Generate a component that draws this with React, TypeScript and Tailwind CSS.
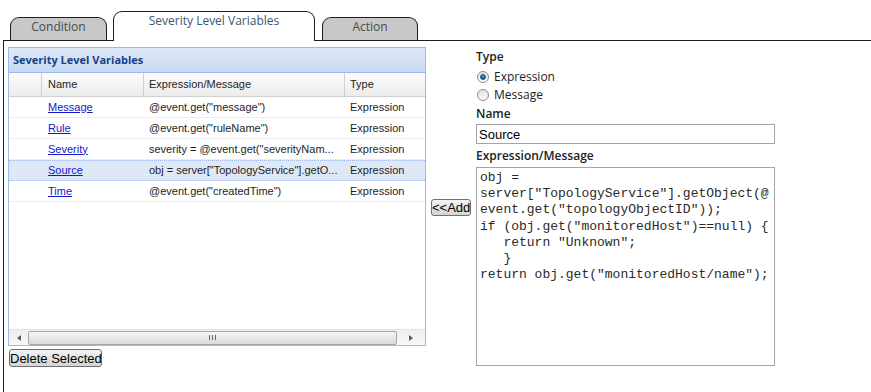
import { useState } from "react";

const rows = [
  { name: "Message", expr: '@event.get("message")', type: "Expression" },
  { name: "Rule", expr: '@event.get("ruleName")', type: "Expression" },
  { name: "Severity", expr: 'severity = @event.get("severityNam...', type: "Expression" },
  { name: "Source", expr: 'obj = server["TopologyService"].getO...', type: "Expression" },
  { name: "Time", expr: '@event.get("createdTime")', type: "Expression" },
];

const code = [
  "obj =",
  'server["TopologyService"].getObject(@',
  'event.get("topologyObjectID"));',
  'if (obj.get("monitoredHost")==null) {',
  '   return "Unknown";',
  "   }",
  'return obj.get("monitoredHost/name");',
].join("\n");

function Radio({ checked }: { checked: boolean }) {
  return (
    <span className="w-[12px] h-[12px] rounded-full border border-[#8e8f8f] bg-gradient-to-b from-[#e2e2e2] to-[#fbfbfb] flex items-center justify-center shrink-0">
      {checked && <span className="w-[6px] h-[6px] rounded-full bg-gradient-to-b from-[#4aa3db] to-[#145f95] border border-[#0f4a78]" />}
    </span>
  );
}

function Scrollbar() {
  return (
    <div className="h-[16px] flex items-center bg-gradient-to-b from-[#eeeeee] to-[#f8f8f8] border-t border-[#e4e4e4]">
      <div className="w-[19px] h-full flex items-center justify-center">
        <span className="w-0 h-0 border-y-[3px] border-y-transparent border-r-[4px] border-r-[#5a5a5a]" />
      </div>
      <div className="w-[369px] h-[14px] rounded-[2px] border border-[#a7a7a7] bg-gradient-to-b from-[#f5f5f5] to-[#d9dada] flex items-center justify-center gap-[2px]">
        <span className="w-px h-[5px] bg-[#666]" />
        <span className="w-px h-[5px] bg-[#666]" />
        <span className="w-px h-[5px] bg-[#666]" />
      </div>
      <div className="flex-1 h-full flex items-center justify-center">
        <span className="w-0 h-0 border-y-[3px] border-y-transparent border-l-[4px] border-l-[#5a5a5a]" />
      </div>
    </div>
  );
}

export default function App() {
  const [kind, setKind] = useState("Expression");
  const tabBase = "h-[23px] rounded-t-[9px] border border-b-0 border-[#1e1e1e] bg-[#c8c8c8] text-[#4a4a4a] text-[12px] leading-4 pt-px text-center";
  const btn = "rounded-[3px] border border-[#707070] bg-gradient-to-b from-[#f4f4f4] to-[#d4d4d4] font-['Liberation_Sans',Arial,sans-serif] text-[13px] leading-none text-black whitespace-nowrap px-0";

  return (
    <div className="w-[871px] h-[392px] bg-white overflow-hidden font-['Open_Sans',sans-serif]">
      <div className="ml-[3px]">
        {/* tab strip */}
        <div className="h-[41px] border-b border-[#1e1e1e] pl-[7px] flex items-end">
          <div className={`${tabBase} w-[97px]`}>Condition</div>
          <div className="ml-[6px] w-[202px] h-[30px] -mb-px rounded-t-[9px] border border-b-0 border-[#1e1e1e] bg-white text-[#3b5870] text-[12px] leading-4 pt-px text-center relative z-10">
            Severity Level Variables
          </div>
          <div className={`${tabBase} ml-[7px] w-[96px]`}>Action</div>
        </div>

        {/* body */}
        <div className="h-[351px] border-l border-[#1e1e1e] pl-[4px] pt-[6px] flex">
          <div className="flex flex-col">
            <div className="w-[418px] h-[299px] border border-[#99bbe8] flex flex-col font-['Liberation_Sans',Arial,sans-serif] text-[11px] text-[#1e1e1e]">
              <div className="h-[25px] shrink-0 border-b border-[#99bbe8] bg-gradient-to-b from-[#dfe8f6] to-[#c8daf2] flex items-center pl-[4px] font-['Open_Sans',sans-serif] font-bold text-[11px] text-[#15428b]">
                Severity Level Variables
              </div>
              <div className="h-[24px] shrink-0 flex border-b border-[#d0d0d0] bg-gradient-to-b from-[#fcfcfc] to-[#ececec]">
                <div className="w-[33px] border-r border-[#d0d0d0]" />
                <div className="w-[102px] border-r border-[#d0d0d0] pl-[6px] flex items-center">Name</div>
                <div className="w-[201px] border-r border-[#d0d0d0] pl-[5px] flex items-center">Expression/Message</div>
                <div className="flex-1 pl-[5px] flex items-center">Type</div>
              </div>
              <div className="flex-1">
                {rows.map((r) => {
                  const sel = r.name === "Source";
                  return (
                    <div
                      key={r.name}
                      className={`h-[21px] flex items-center border-b ${sel ? "bg-[#dfe8f6] border-dotted border-[#a3bae9] border-t" : "border-[#ededed]"}`}
                    >
                      <div className="w-[33px]" />
                      <div className="w-[102px] pl-[6px]">
                        <a className="text-[#1515cc] underline">{r.name}</a>
                      </div>
                      <div className="w-[201px] pl-[5px] whitespace-nowrap">{r.expr}</div>
                      <div className="flex-1 pl-[5px]">{r.type}</div>
                    </div>
                  );
                })}
              </div>
              <Scrollbar />
            </div>
            <button className={`${btn} mt-[3px] ml-px w-[93px] h-[18px]`}>Delete Selected</button>
          </div>

          <button className={`${btn} ml-[5px] mt-[152px] w-[40px] h-[17px] self-start`}>&lt;&lt;Add</button>

          <div className="ml-[5px] -mt-[6px] pt-[8px] flex flex-col text-[12px] text-[#222]">
            <div className="h-[16px] leading-4 font-semibold">Type</div>
            {["Expression", "Message"].map((k, i) => (
              <label
                key={k}
                onClick={() => setKind(k)}
                className={`h-[16px] flex items-center gap-[5px] pl-px leading-4 ${i === 0 ? "mt-[4px]" : "mt-[2px]"}`}
              >
                <Radio checked={kind === k} />
                <span>{k}</span>
              </label>
            ))}
            <div className="mt-[3px] h-[16px] leading-4 font-semibold">Name</div>
            <input
              readOnly
              value="Source"
              className="mt-[2px] w-[299px] h-[20px] border border-[#a5a5a5] px-[2px] font-['Liberation_Sans',Arial,sans-serif] text-[13px] text-black outline-none"
            />
            <div className="mt-[4px] h-[16px] leading-4 font-semibold">Expression/Message</div>
            <textarea
              readOnly
              value={code}
              wrap="off"
              className="mt-[3px] w-[299px] h-[199px] border border-[#a5a5a5] pl-[3px] pt-[2px] font-['Liberation_Mono','Courier_New',monospace] text-[13px] leading-[16.2px] text-[#2a2a2a] resize-none overflow-hidden outline-none"
            />
          </div>
        </div>
      </div>
    </div>
  );
}
